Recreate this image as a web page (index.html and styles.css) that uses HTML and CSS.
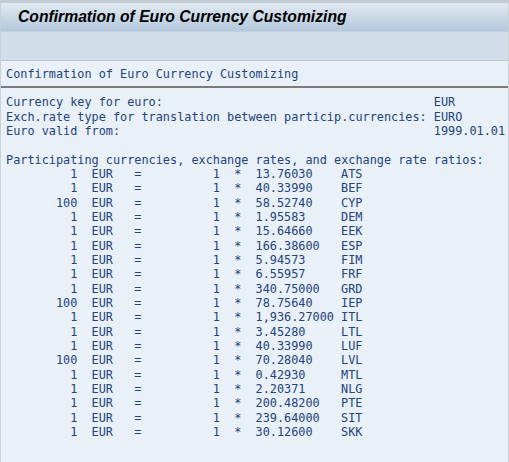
FILE: index.html
```html
<!DOCTYPE html>
<html lang="en">

<head>
    <meta charset="UTF-8">
    <title>Confirmation of Euro Currency Customizing</title>
    <link rel="stylesheet" href="styles.css">
</head>

<body>
    <!-- Window title bar -->
    <div class="title-bar">
        <h1>Confirmation of Euro Currency Customizing</h1>
    </div>

    <!-- Empty application toolbar -->
    <div class="toolbar"></div>

    <!-- List output -->
    <div class="list">
        <div class="list-header">Confirmation of Euro Currency Customizing</div>

        <div class="field"><span class="label">Currency key for euro:</span><span>EUR</span></div>
        <div class="field"><span class="label">Exch.rate type for translation between particip.currencies:</span><span>EURO</span></div>
        <div class="field"><span class="label">Euro valid from:</span><span>1999.01.01</span></div>
        <div class="blank"></div>
        <div>Participating currencies, exchange rates, and exchange rate ratios:</div>

        <div class="rates">
            <span class="amt">1</span><span class="cur">EUR</span><span class="eq">=</span><span class="amt">1</span><span class="eq">*</span><span class="rate">13.76030</span><span>ATS</span>
            <span class="amt">1</span><span class="cur">EUR</span><span class="eq">=</span><span class="amt">1</span><span class="eq">*</span><span class="rate">40.33990</span><span>BEF</span>
            <span class="amt">100</span><span class="cur">EUR</span><span class="eq">=</span><span class="amt">1</span><span class="eq">*</span><span class="rate">58.52740</span><span>CYP</span>
            <span class="amt">1</span><span class="cur">EUR</span><span class="eq">=</span><span class="amt">1</span><span class="eq">*</span><span class="rate">1.95583</span><span>DEM</span>
            <span class="amt">1</span><span class="cur">EUR</span><span class="eq">=</span><span class="amt">1</span><span class="eq">*</span><span class="rate">15.64660</span><span>EEK</span>
            <span class="amt">1</span><span class="cur">EUR</span><span class="eq">=</span><span class="amt">1</span><span class="eq">*</span><span class="rate">166.38600</span><span>ESP</span>
            <span class="amt">1</span><span class="cur">EUR</span><span class="eq">=</span><span class="amt">1</span><span class="eq">*</span><span class="rate">5.94573</span><span>FIM</span>
            <span class="amt">1</span><span class="cur">EUR</span><span class="eq">=</span><span class="amt">1</span><span class="eq">*</span><span class="rate">6.55957</span><span>FRF</span>
            <span class="amt">1</span><span class="cur">EUR</span><span class="eq">=</span><span class="amt">1</span><span class="eq">*</span><span class="rate">340.75000</span><span>GRD</span>
            <span class="amt">100</span><span class="cur">EUR</span><span class="eq">=</span><span class="amt">1</span><span class="eq">*</span><span class="rate">78.75640</span><span>IEP</span>
            <span class="amt">1</span><span class="cur">EUR</span><span class="eq">=</span><span class="amt">1</span><span class="eq">*</span><span class="rate">1,936.27000</span><span>ITL</span>
            <span class="amt">1</span><span class="cur">EUR</span><span class="eq">=</span><span class="amt">1</span><span class="eq">*</span><span class="rate">3.45280</span><span>LTL</span>
            <span class="amt">1</span><span class="cur">EUR</span><span class="eq">=</span><span class="amt">1</span><span class="eq">*</span><span class="rate">40.33990</span><span>LUF</span>
            <span class="amt">100</span><span class="cur">EUR</span><span class="eq">=</span><span class="amt">1</span><span class="eq">*</span><span class="rate">70.28040</span><span>LVL</span>
            <span class="amt">1</span><span class="cur">EUR</span><span class="eq">=</span><span class="amt">1</span><span class="eq">*</span><span class="rate">0.42930</span><span>MTL</span>
            <span class="amt">1</span><span class="cur">EUR</span><span class="eq">=</span><span class="amt">1</span><span class="eq">*</span><span class="rate">2.20371</span><span>NLG</span>
            <span class="amt">1</span><span class="cur">EUR</span><span class="eq">=</span><span class="amt">1</span><span class="eq">*</span><span class="rate">200.48200</span><span>PTE</span>
            <span class="amt">1</span><span class="cur">EUR</span><span class="eq">=</span><span class="amt">1</span><span class="eq">*</span><span class="rate">239.64000</span><span>SIT</span>
            <span class="amt">1</span><span class="cur">EUR</span><span class="eq">=</span><span class="amt">1</span><span class="eq">*</span><span class="rate">30.12600</span><span>SKK</span>
        </div>
    </div>
</body>

</html>
```

FILE: styles.css
```css
/* Page frame */
body {
    margin: 0;
    height: 100vh;
    display: flex;
    flex-direction: column;
    background-color: #e9f0f7;
    border-top: 3px solid #c3ccd5;
    border-left: 1px solid #c8d0d8;
    border-right: 1px solid #c8d0d8;
    box-sizing: border-box;
}

/* Title bar with blue gradient */
.title-bar {
    flex-shrink: 0;
    height: 28px;
    display: flex;
    align-items: center;
    padding-left: 17px;
    background: linear-gradient(to bottom, #e1e9f1, #b3c8dc);
}

.title-bar h1 {
    margin: 0;
    font-family: 'Liberation Sans', Arial, sans-serif;
    font-size: 15.7px;
    font-weight: bold;
    font-style: italic;
    color: #000000;
}

/* Application toolbar (empty) */
.toolbar {
    flex-shrink: 0;
    height: 28px;
    background-color: #d1dde8;
    border-top: 1px solid #c3d0dc;
    border-bottom: 1px solid #b8c4cf;
}

/* List area, monospace output */
.list {
    flex: 1;
    padding: 6px 0 0 5px;
    font-family: 'DejaVu Sans Mono', monospace;
    font-size: 11.85px;
    line-height: 14.33px;
    color: #22437c;
}

.list-header {
    padding-bottom: 5px;
    border-bottom: 2px solid #7b7b7b;
    margin: 0 0 7px -5px;
    padding-left: 5px;
}

.field {
    display: flex;
}

.field .label {
    width: 60ch;
    white-space: pre;
}

.blank {
    height: 14.33px;
}

/* Rates table: columns in character cells */
.rates {
    display: grid;
    grid-template-columns: 10ch 6ch 3ch 11ch 3ch 14ch 3ch;
}

.rates .amt,
.rates .eq {
    text-align: right;
}

.rates .cur,
.rates .rate {
    padding-left: 2ch;
}
```
